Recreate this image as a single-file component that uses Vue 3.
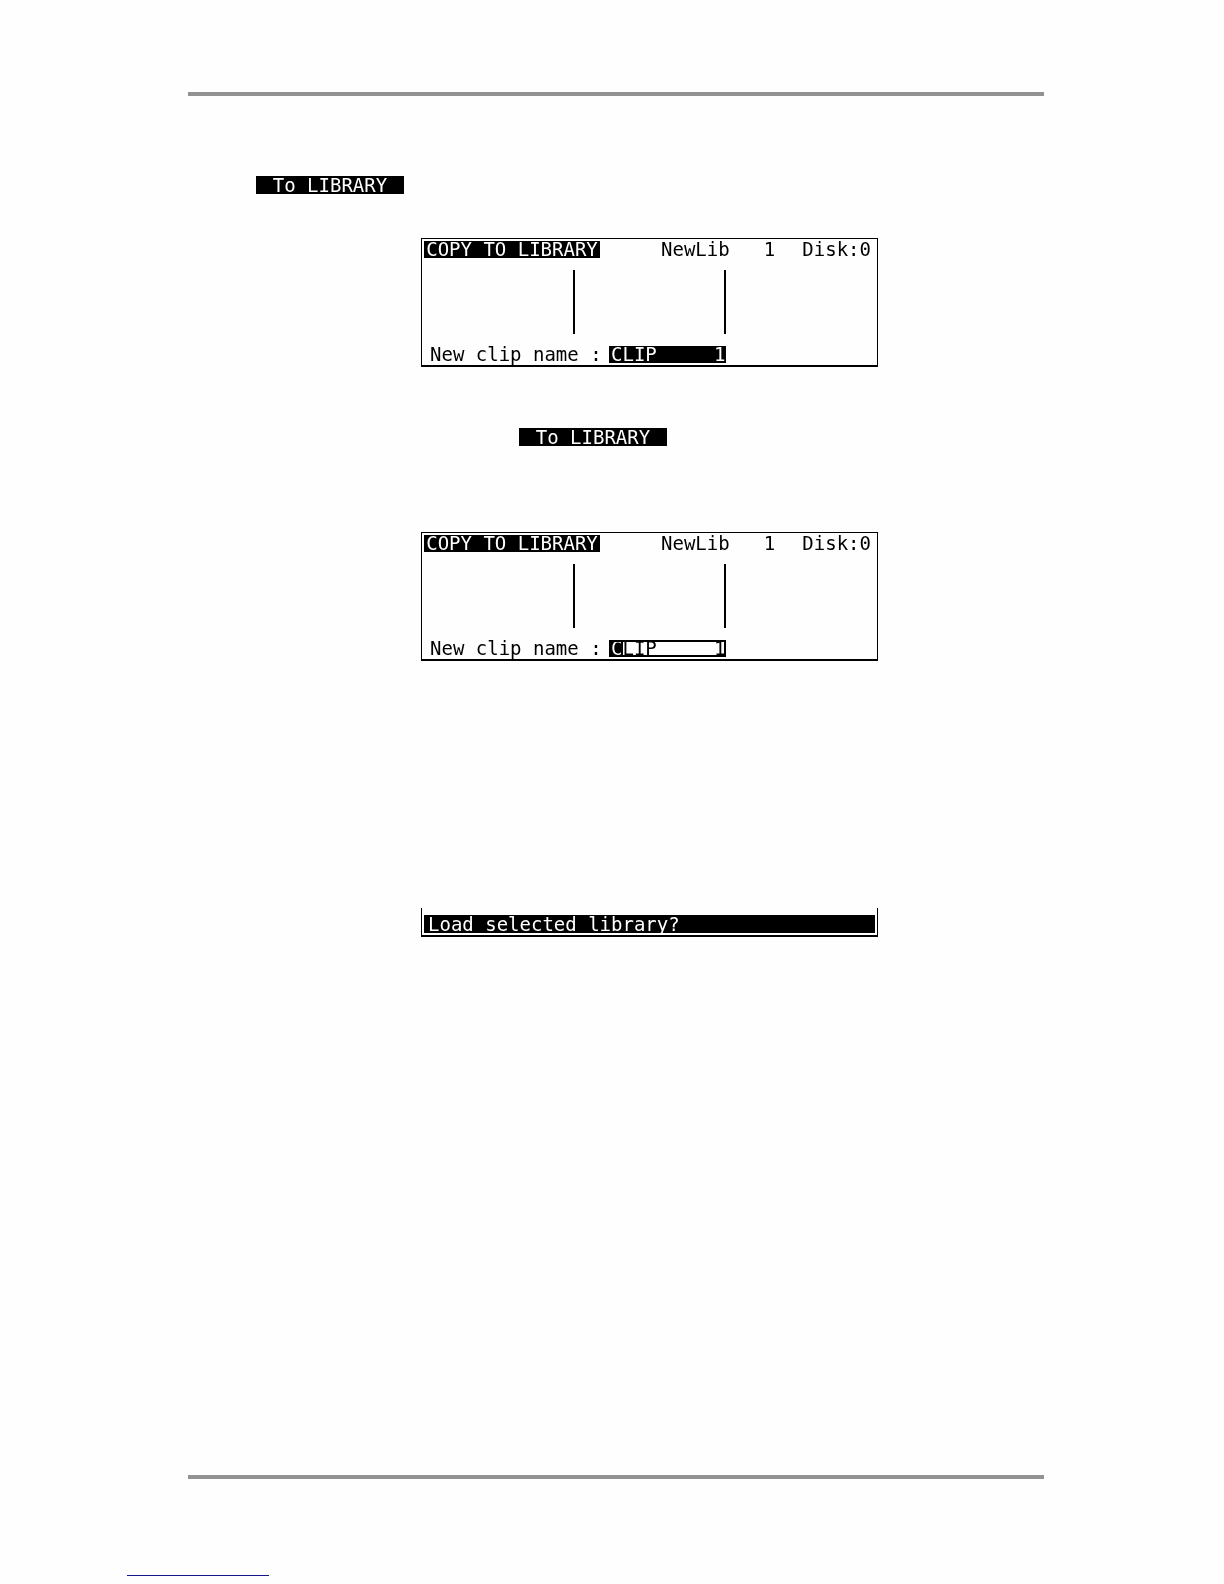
<script setup>
import { ref } from 'vue'

const clips = ref([
  { id: 'clip-name', value: 'CLIP     1', editing: false },
  { id: 'clip-name-edit', value: 'CLIP     1', editing: true },
])
</script>

<template>
  <div class="page">
    <hr class="rule" />
    <main class="body">
      <template v-for="clip in clips" :key="clip.id">
        <button type="button" class="key" :class="{ inset: clip.editing }">To LIBRARY</button>
        <section class="screen" :class="{ lower: clip.editing }">
          <header class="top">
            <h2 class="title">COPY TO LIBRARY</h2>
            <div class="library"><span>NewLib</span><span>1</span></div>
            <span class="disk">Disk:0</span>
          </header>
          <div class="columns">
            <div class="column"></div>
            <div class="column"></div>
            <div class="column"></div>
          </div>
          <div class="entry">
            <label :for="clip.id">New clip name :</label>
            <div class="field" :class="{ editing: clip.editing }">
              <input :id="clip.id" v-model="clip.value" type="text" maxlength="10" />
              <span v-if="clip.editing" class="cursor"></span>
            </div>
          </div>
        </section>
      </template>
      <section class="prompt">
        <p>Load selected library?</p>
      </section>
    </main>
    <hr class="rule" />
    <footer class="footer"><a href="#" class="link"></a></footer>
  </div>
</template>

<style>
body {
  margin: 0;
  background: #fefefe;
}
</style>

<style scoped>
.page {
  box-sizing: border-box;
  min-height: 100vh;
  display: flex;
  flex-direction: column;
  padding: 92px 180px 8px 188px;
  font: 19px/18px "DejaVu Sans Mono", "Liberation Mono", monospace;
  color: #000;
}
.rule {
  width: 100%;
  height: 4px;
  margin: 0;
  border: 0;
  background: #929292;
}
.body {
  flex: 1;
  display: flex;
  flex-direction: column;
  align-items: flex-start;
  padding-top: 80px;
}
.key {
  width: 148px;
  height: 18px;
  margin-left: 68px;
  padding: 0;
  border: 0;
  background: #000;
  color: #fff;
  font: inherit;
}
.key.inset {
  margin-top: 61px;
  margin-left: 331px;
}
.screen,
.prompt {
  box-sizing: border-box;
  width: 100%;
  max-width: 457px;
  margin-left: 233px;
  border: 1px solid #000;
  border-bottom-width: 2px;
}
.screen {
  margin-top: 44px;
  padding: 2px;
  line-height: 16px;
}
.screen.lower {
  margin-top: 86px;
}
.top {
  display: flex;
  height: 17px;
}
.title {
  width: 176px;
  margin: 0;
  background: #000;
  color: #fff;
  font: inherit;
  text-align: center;
}
.library {
  display: flex;
  gap: 34px;
  margin-left: 61px;
}
.disk {
  margin-left: auto;
  padding-right: 4px;
}
.columns {
  display: flex;
  height: 64px;
  margin-top: 12px;
}
.column {
  box-sizing: border-box;
  flex: 1;
}
.column + .column {
  border-left: 2px solid #000;
}
.entry {
  display: flex;
  height: 17px;
  margin-top: 12px;
  padding-left: 6px;
}
.entry label {
  width: 179px;
}
.field {
  position: relative;
  width: 117px;
  background: #000;
  color: #fff;
}
.field.editing {
  background: #fefefe;
  color: #000;
  box-shadow: inset 0 0 0 2px #000;
}
.field input {
  display: block;
  box-sizing: border-box;
  width: 100%;
  height: 16px;
  padding: 0 0 0 2px;
  border: 0;
  outline: 0;
  background: transparent;
  color: inherit;
  font: inherit;
}
.cursor {
  position: absolute;
  top: 2px;
  left: 2px;
  width: 12px;
  height: 13px;
  background: #fff;
  mix-blend-mode: difference;
}
.prompt {
  margin-top: 247px;
  padding: 7px 2px 2px;
  border-top: 0;
}
.prompt p {
  margin: 0;
  padding-left: 4px;
  background: #000;
  color: #fff;
}
.footer {
  display: flex;
  height: 97px;
  align-items: flex-end;
}
.link {
  width: 142px;
  margin-left: -61px;
  border-bottom: 1px solid #16168c;
}
</style>
